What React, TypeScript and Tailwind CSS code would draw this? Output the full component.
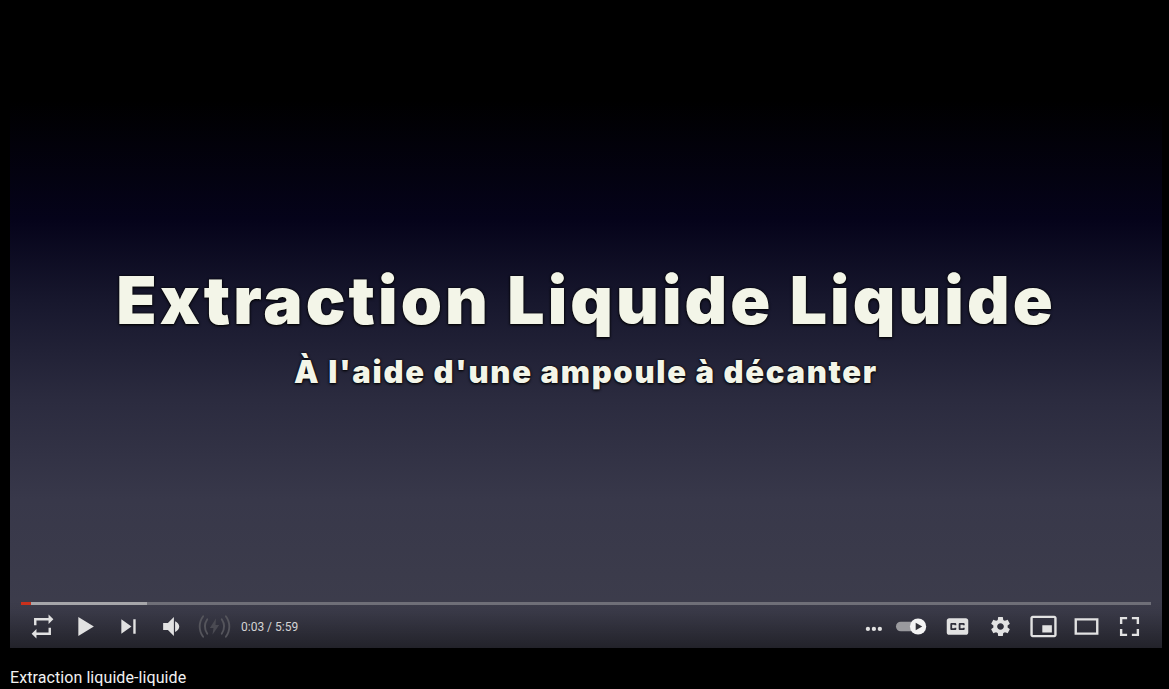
import type { ReactNode } from "react";

const Icon = ({ children, view = "0 0 36 36", className = "w-[43px] h-[43px]" }: { children: ReactNode; view?: string; className?: string }) => (
  <div className="w-[43px] h-[43px] flex items-center justify-center shrink-0">
    <svg viewBox={view} className={className} fill="#e2e2e2">
      {children}
    </svg>
  </div>
);

const App = () => {
  return (
    <div className="w-[1169px] h-[689px] bg-black overflow-hidden flex flex-col font-['Roboto',sans-serif]">
      <div className="ml-[10px] w-[1152px] h-[648px] shrink-0 flex flex-col bg-[linear-gradient(180deg,#000000_0px,#000000_100px,#05031a_220px,#17172d_300px,#2b2b3f_400px,#38384a_500px,#3e3e4c_648px)]">
        <div className="pt-[260px] flex flex-col items-center text-[#f3f5e8] font-['Inter',sans-serif] font-black [text-shadow:0_1px_3px_#000,0_0_2px_#000]">
          <h1 className="text-[66px] leading-[80px] tracking-[3.1px] whitespace-nowrap">Extraction Liquide Liquide</h1>
          <h2 className="text-[31px] leading-[40px] tracking-[1.7px] whitespace-nowrap mt-[12px]">À l'aide d'une ampoule à décanter</h2>
        </div>
        <div className="mt-auto h-[47px] flex flex-col px-[11px] bg-[linear-gradient(180deg,rgba(0,0,0,0)_0%,rgba(0,0,0,0.05)_20%,rgba(0,0,0,0.45)_100%)]">
          <div className="h-[3px] bg-[#6f6f78] flex shrink-0 mt-[1px]">
            <div className="w-[10px] bg-[#c9301c]" />
            <div className="w-[116px] bg-[#a6a6aa]" />
          </div>
          <div className="flex items-center text-[#dddddd]">
            <Icon view="0 0 24 24" className="w-[29px] h-[29px]">
              <path d="M7 7h10v3l4-4-4-4v3H5v6h2V7zm10 10H7v-3l-4 4 4 4v-3h12v-6h-2v4z" />
            </Icon>
            <Icon>
              <path d="M12 26 18.5 22 18.5 14 12 10z M18.5 22 25 18 25 18 18.5 14z" />
            </Icon>
            <Icon>
              <path d="M12 24 20.5 18 12 12V24z M22 12v12h2V12h-2z" />
            </Icon>
            <Icon>
              <path transform="translate(3 0)" d="M8 21 12 21 17 26 17 10 12 15 8 15 8 21Z M18 13.5 18 22.5C20 21.6 21.5 19.9 21.5 18C21.5 16.1 20 14.4 18 13.5Z" />
            </Icon>
            <Icon view="0 0 32 24" className="w-[33px] h-[25px]">
              <g fill="none" stroke="#55555c" strokeWidth="1.8" strokeLinecap="round">
                <path d="M5 2C0.5 8 0.5 16 5 22" />
                <path d="M9 5C6 9.5 6 14.5 9 19" />
                <path d="M27 2C31.5 8 31.5 16 27 22" />
                <path d="M23 5C26 9.5 26 14.5 23 19" />
              </g>
              <path d="M17.5 4 11.5 13.5H15L14 20 20.5 10.5H17z" fill="#4a4a52" />
            </Icon>
            <span className="ml-[5px] text-[12px] leading-none text-[#d4d4d4]">0:03 / 5:59</span>
            <div className="ml-auto flex items-center">
              <Icon>
                <circle cx="15" cy="20" r="1.8" />
                <circle cx="20" cy="20" r="1.8" />
                <circle cx="25" cy="20" r="1.8" />
              </Icon>
              <Icon>
                <rect x="2.5" y="14" width="20" height="8" rx="4" fill="#9a9a9e" />
                <circle cx="21" cy="18" r="6.8" fill="#f4f4f4" />
                <path d="M19 14.8 24.5 18 19 21.2z" fill="#33333a" />
              </Icon>
              <Icon>
                <path
                  fillRule="evenodd"
                  d="M11 11C9.89 11 9 11.9 9 13V23C9 24.1 9.89 25 11 25H25C26.1 25 27 24.1 27 23V13C27 11.9 26.1 11 25 11H11ZM17 17H15.5V16.5H13.5V19.5H15.5V19H17V20C17 20.55 16.55 21 16 21H13C12.45 21 12 20.55 12 20V16C12 15.45 12.45 15 13 15H16C16.55 15 17 15.45 17 16V17ZM24 17H22.5V16.5H20.5V19.5H22.5V19H24V20C24 20.55 23.55 21 23 21H20C19.45 21 19 20.55 19 20V16C19 15.45 19.45 15 20 15H23C23.55 15 24 15.45 24 16V17Z"
                />
              </Icon>
              <Icon>
                <path
                  fillRule="evenodd"
                  d="m23.94 18.78c.03-.25.05-.51.05-.78 0-.27-.02-.52-.05-.78l1.68-1.32c.15-.12.19-.33.09-.51l-1.6-2.76c-.09-.17-.31-.24-.48-.17l-1.99.8c-.41-.32-.86-.58-1.35-.78l-.3-2.12c-.02-.19-.19-.33-.39-.33l-3.2 0c-.2 0-.36.14-.39.33l-.3 2.12c-.48.2-.93.47-1.35.78l-1.99-.8c-.18-.07-.39 0-.48.17l-1.6 2.76c-.1.17-.05.39.09.51l1.68 1.32c-.03.25-.05.52-.05.78 0 .26.02.52.05.78l-1.68 1.32c-.15.12-.19.33-.09.51l1.6 2.76c.09.17.31.24.48.17l1.99-.8c.41.32.86.58 1.35.78l.3 2.12c.02.19.19.33.39.33l3.2 0c.2 0 .36-.14.39-.33l.3-2.12c.48-.2.93-.47 1.35-.78l1.99.8c.18.07.39 0 .48-.17l1.6-2.76c.09-.17.05-.39-.09-.51l-1.68-1.32zm-5.94 2.01c-1.54 0-2.8-1.25-2.8-2.8 0-1.54 1.25-2.8 2.8-2.8 1.54 0 2.8 1.25 2.8 2.8 0 1.54-1.25 2.8-2.8 2.8z"
                />
              </Icon>
              <Icon>
                <path
                  fillRule="evenodd"
                  d="M25 17H17V23H25V17ZM29 25V10.98C29 9.88 28.1 9 27 9H9C7.9 9 7 9.88 7 10.98V25C7 26.1 7.9 27 9 27H27C28.1 27 29 26.1 29 25ZM27 25.02H9V10.97H27V25.02Z"
                />
              </Icon>
              <Icon>
                <path fillRule="evenodd" d="m28 11 0 14-20 0 0-14zm-18 2 16 0 0 10-16 0 0-10z" />
              </Icon>
              <Icon>
                <path d="m10 16 2 0 0-4 4 0 0-2L10 10l0 6z" />
                <path d="m20 10 0 2 4 0 0 4 2 0L26 10l-6 0z" />
                <path d="m24 24-4 0 0 2L26 26l0-6-2 0 0 4z" />
                <path d="M12 20 10 20 10 26l6 0 0-2-4 0 0-4z" />
              </Icon>
            </div>
          </div>
        </div>
      </div>
      <p className="ml-[10px] mt-[20px] text-[16px] tracking-[0.08px] leading-[19px] text-[#f1f1f1]">Extraction liquide-liquide</p>
    </div>
  );
};

export default App;
